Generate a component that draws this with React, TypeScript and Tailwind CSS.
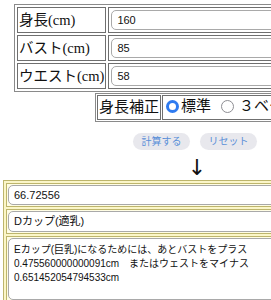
import React from "react";

const serif = "font-['Liberation_Serif','Noto_Sans_CJK_JP',serif]";
const sans = "font-['Liberation_Sans','Noto_Sans_CJK_JP',sans-serif]";

const inputs = [
  { label: "身長(cm)", value: "160" },
  { label: "バスト(cm)", value: "85" },
  { label: "ウエスト(cm)", value: "58" },
];

function Field({ value }: { value: string }) {
  return (
    <div
      className={`flex h-[20px] w-[320px] items-center rounded-[5px] border border-[#a9a9a9] bg-white pl-[5px] text-[11px] text-[#111] ${sans}`}
    >
      {value}
    </div>
  );
}

function Radio({ on }: { on?: boolean }) {
  return on ? (
    <span className="inline-block h-[13px] w-[13px] rounded-full border-[3.5px] border-[#2f7bf0] bg-white" />
  ) : (
    <span className="inline-block h-[13px] w-[13px] rounded-full border border-[#8e8e93] bg-white" />
  );
}

export default function App() {
  return (
    <div className="relative h-[300px] w-[271px] overflow-hidden bg-white">
      {/* input table */}
      <table className="ml-[14px] mt-[4px] border-separate border-spacing-[2px] border border-[#8a8a8a]">
        <tbody>
          {inputs.map((row) => (
            <tr key={row.label}>
              <td
                className={`h-[26px] border border-[#6f6f6f] px-[1px] text-[14.5px] leading-none text-[#111] whitespace-nowrap ${serif}`}
              >
                {row.label}
              </td>
              <td className="border border-[#6f6f6f] p-[2px]">
                <Field value={row.value} />
              </td>
            </tr>
          ))}
        </tbody>
      </table>

      {/* height correction */}
      <table className="ml-[95px] mt-[1px] border-separate border-spacing-[1px] border border-[#8a8a8a]">
        <tbody>
          <tr>
            <td
              className={`h-[25px] border border-[#6f6f6f] px-[1px] text-[15px] leading-none text-[#111] whitespace-nowrap ${serif}`}
            >
              身長補正
            </td>
            <td
              className={`border border-[#6f6f6f] pl-[3px] pr-[40px] text-[15px] leading-none text-[#111] whitespace-nowrap ${serif}`}
            >
              <span className="inline-flex items-center gap-[2px]">
                <Radio on />
                <span>標準</span>
                <span className="ml-[6px]" />
                <Radio />
                <span className="ml-[3px]">３ベース補正</span>
              </span>
            </td>
          </tr>
        </tbody>
      </table>

      {/* buttons */}
      <div className={`ml-[133px] mt-[11px] flex gap-[10px] ${sans}`}>
        <button className="h-[17px] w-[57px] rounded-full bg-[#e8e8ed] text-[10px] leading-none text-[#5a8fd8]">
          計算する
        </button>
        <button className="h-[17px] w-[57px] rounded-full bg-[#e8e8ed] text-[10px] leading-none text-[#5a8fd8]">
          リセット
        </button>
      </div>

      {/* arrow */}
      <div className="ml-[186px] mt-[6px] h-[24px] w-[22px] text-center font-['DejaVu_Sans',sans-serif] text-[22px] leading-[24px] text-[#111]">
        ↓
      </div>

      {/* results */}
      <table className="ml-[3px] mt-[0px] w-[420px] border-separate border-spacing-[2px] border border-[#bdb56c] bg-[#fbf6c8]">
        <tbody>
          <tr>
            <td className="border border-[#bdb56c] bg-[#fffde4] p-[1px]">
              <Field value="66.72556" />
            </td>
          </tr>
          <tr>
            <td className="border border-[#bdb56c] bg-[#fffde4] p-[1px]">
              <div
                className={`flex h-[21px] w-[320px] items-center rounded-[5px] border border-[#a9a9a9] bg-white pl-[5px] text-[11px] text-[#111] ${sans}`}
              >
                Dカップ(適乳)
              </div>
            </td>
          </tr>
          <tr>
            <td className="border border-[#bdb56c] bg-[#fffde4] p-[1px]">
              <div
                className={`h-[62px] w-[320px] rounded-[5px] border border-[#a9a9a9] bg-white px-[5px] pt-[4px] text-[10px] leading-[14px] text-[#111] ${sans}`}
              >
                Eカップ(巨乳)になるためには、あとバストをプラス
                <br />
                0.475560000000091cm　またはウェストをマイナス
                <br />
                0.651452054794533cm
              </div>
            </td>
          </tr>
        </tbody>
      </table>
    </div>
  );
}
